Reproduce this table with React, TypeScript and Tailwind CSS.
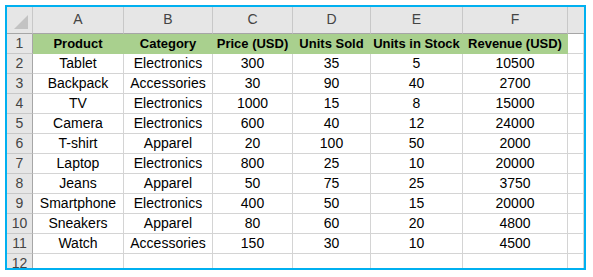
import React from "react";

const rows: string[][] = [
  ["Tablet", "Electronics", "300", "35", "5", "10500"],
  ["Backpack", "Accessories", "30", "90", "40", "2700"],
  ["TV", "Electronics", "1000", "15", "8", "15000"],
  ["Camera", "Electronics", "600", "40", "12", "24000"],
  ["T-shirt", "Apparel", "20", "100", "50", "2000"],
  ["Laptop", "Electronics", "800", "25", "10", "20000"],
  ["Jeans", "Apparel", "50", "75", "25", "3750"],
  ["Smartphone", "Electronics", "400", "50", "15", "20000"],
  ["Sneakers", "Apparel", "80", "60", "20", "4800"],
  ["Watch", "Accessories", "150", "30", "10", "4500"],
];

const headers = ["Product", "Category", "Price (USD)", "Units Sold", "Units in Stock", "Revenue (USD)"];
const letters = ["A", "B", "C", "D", "E", "F"];

const rowNum = "flex items-center justify-center bg-[#e6e6e6] text-[#444] border-r border-r-[#a6a6a6] border-b border-b-[#c8c8c8] text-[14px]";
const cell = "flex items-center justify-center border-r border-b border-[#d4d4d4] text-[14px] text-black whitespace-nowrap overflow-hidden";

export default function App() {
  return (
    <div className="w-[593px] h-[277px] bg-white pt-[5px] pl-[5px]" style={{ fontFamily: '"Liberation Sans", Arial, sans-serif' }}>
      <div className="w-[581px] h-[265px] border-2 border-[#00b0f0] overflow-hidden">
        <div className="grid grid-cols-[26px_91px_89px_80px_78px_92px_105px_1fr] auto-rows-[20px] [grid-template-rows:27px]">
          {/* column header row */}
          <div className="relative bg-[#e6e6e6] border-r border-r-[#c8c8c8] border-b border-b-[#a6a6a6] h-[27px]">
            <div className="absolute right-[4px] bottom-[4px] w-0 h-0 border-l-[14px] border-l-transparent border-b-[14px] border-b-[#c3c3c3]" />
          </div>
          {letters.map((l) => (
            <div key={l} className="flex items-end justify-center pb-[3px] h-[27px] bg-[#e6e6e6] text-[#444] text-[14px] border-r border-r-[#c8c8c8] border-b border-b-[#a6a6a6]">
              {l}
            </div>
          ))}
          <div className="h-[27px] bg-[#e6e6e6] border-b border-b-[#a6a6a6]" />

          {/* row 1 */}
          <div className={rowNum}>1</div>
          {headers.map((h) => (
            <div key={h} className="flex items-center justify-center bg-[#a9d08e] border-r border-b border-[#a9d08e] text-[13px] font-bold text-black whitespace-nowrap">
              {h}
            </div>
          ))}
          <div className={cell} />

          {rows.map((r, i) => (
            <React.Fragment key={i}>
              <div className={rowNum}>{i + 2}</div>
              {r.map((v, j) => (
                <div key={j} className={cell}>
                  {v}
                </div>
              ))}
              <div className={cell} />
            </React.Fragment>
          ))}

          <div className={rowNum}>12</div>
          {[0, 1, 2, 3, 4, 5, 6].map((k) => (
            <div key={k} className={cell} />
          ))}
        </div>
      </div>
    </div>
  );
}
